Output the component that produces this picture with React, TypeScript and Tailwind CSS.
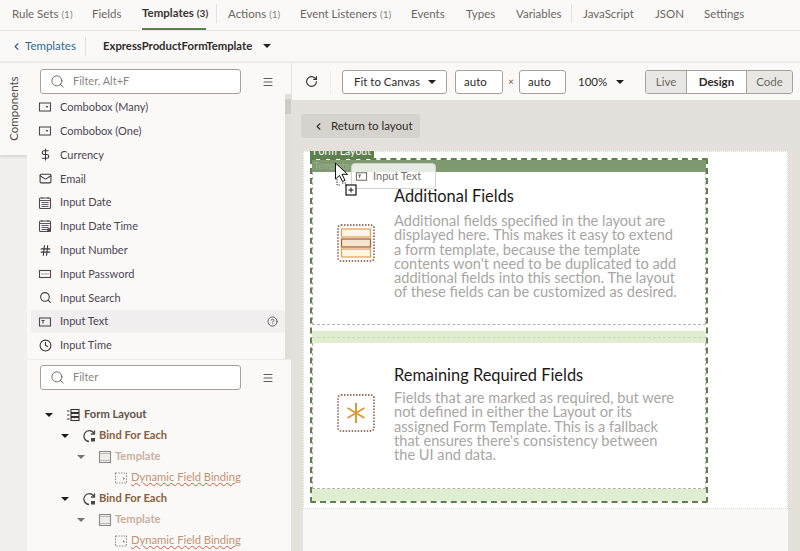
import { ChevronLeft, Search, Menu, RotateCw, DollarSign, Mail, Hash, Clock, CircleHelp } from 'lucide-react';
import type { ReactNode } from 'react';

const tabs = [
  { label: 'Rule Sets', count: '(1)', w: 'w-[58px]' },
  { label: 'Fields', w: 'w-[28px]' },
  { label: 'Templates', count: '(3)', active: true, w: 'w-[64px]', divider: true },
  { label: 'Actions', count: '(1)', w: 'w-[50px]' },
  { label: 'Event Listeners', count: '(1)', w: 'w-[89px]' },
  { label: 'Events', w: 'w-[33px]' },
  { label: 'Types', w: 'w-[28px]' },
  { label: 'Variables', w: 'w-[45px]', divider: true },
  { label: 'JavaScript', w: 'w-[50px]' },
  { label: 'JSON', w: 'w-[27px]' },
  { label: 'Settings', w: 'w-[40px]' },
];

function Box({ children }: { children: ReactNode }) {
  return (
    <svg viewBox="0 0 14 14" className="h-[14px] w-[14px] text-[#4f4a4f]" fill="none" stroke="currentColor" strokeWidth="1.1">
      {children}
    </svg>
  );
}

const ComboIcon = () => (
  <Box>
    <rect x="1.5" y="3" width="11" height="8" />
    <path d="M7.5 6h3l-1.5 2z" fill="currentColor" stroke="none" />
  </Box>
);
const DateIcon = ({ clock }: { clock?: boolean }) => (
  <Box>
    <rect x="1.5" y="2" width="11" height="10.5" rx="1" />
    <path d="M1.5 4.5h11M4 1v2M10 1v2M3.5 6.5h7M3.5 8.5h7M3.5 10.5h7" strokeWidth="0.9" />
    {clock && <circle cx="11" cy="11" r="2" fill="currentColor" stroke="none" />}
  </Box>
);
const PasswordIcon = () => (
  <Box>
    <rect x="1.5" y="3.5" width="11" height="7" />
    <path d="M3.5 7h7" strokeDasharray="1 1" />
  </Box>
);
const TextIcon = ({ className }: { className?: string }) => (
  <svg viewBox="0 0 14 14" className={className ?? 'h-[14px] w-[14px] text-[#4f4a4f]'} fill="none" stroke="currentColor" strokeWidth="1.1">
    <rect x="1.5" y="3" width="11" height="8" />
    <path d="M3.5 5.5h3M5 5.5v3" />
  </svg>
);

const lucideCls = 'h-[13px] w-[13px] text-[#3d383d]';
const components: { label: string; icon: ReactNode }[] = [
  { label: 'Combobox (Many)', icon: <ComboIcon /> },
  { label: 'Combobox (One)', icon: <ComboIcon /> },
  { label: 'Currency', icon: <DollarSign className={lucideCls} /> },
  { label: 'Email', icon: <Mail className={lucideCls} /> },
  { label: 'Input Date', icon: <DateIcon /> },
  { label: 'Input Date Time', icon: <DateIcon clock /> },
  { label: 'Input Number', icon: <Hash className={lucideCls} /> },
  { label: 'Input Password', icon: <PasswordIcon /> },
  { label: 'Input Search', icon: <Search className={lucideCls} /> },
  { label: 'Input Text', icon: <TextIcon /> },
  { label: 'Input Time', icon: <Clock className={lucideCls} /> },
];

function FilterBox({ placeholder }: { placeholder: string }) {
  return (
    <div className="flex items-center pl-[13px]">
      <div className="flex h-[25px] w-[201px] items-center gap-[8px] rounded-[3px] border border-[#a5a19c] bg-white pl-[9px]">
        <Search className="h-[15px] w-[15px] text-[#6b6762]" strokeWidth={1.5} />
        <span className="text-[11px] text-[#8a8682]">{placeholder}</span>
      </div>
      <Menu className="ml-[21px] h-[12px] w-[12px] text-[#5d5954]" />
    </div>
  );
}

function TreeRow({ indent, icon, label, tone, caret }: { indent: string; icon: ReactNode; label: string; tone: string; caret: string }) {
  return (
    <div className={`flex h-[21px] items-center ${indent}`}>
      <span className={`mr-[13px] h-0 w-0 border-x-[4px] border-t-[4px] border-x-transparent ${caret}`} />
      {icon}
      <span className={`ml-[3px] text-[11.2px] ${tone}`}>{label}</span>
    </div>
  );
}

const LayoutIcon = () => (
  <svg viewBox="0 0 14 14" className="mr-[1px] h-[14px] w-[14px] text-[#37322f]" fill="none" stroke="currentColor" strokeWidth="1.1">
    <rect x="5" y="1.5" width="8" height="3" />
    <rect x="5" y="5.5" width="8" height="3" />
    <rect x="5" y="9.5" width="8" height="3" />
    <path d="M1 3h2.5M1 7h2.5M1 11h2.5" />
  </svg>
);
const BindIcon = () => (
  <svg viewBox="0 0 14 14" className="h-[14px] w-[14px] text-[#4b4540]" fill="none" stroke="currentColor" strokeWidth="1.3">
    <path d="M12 4.5A5.4 5.4 0 1 0 7 12.5" />
    <path d="M12.5 1.5v3.5H9" />
    <rect x="9" y="9" width="4" height="3.5" fill="currentColor" stroke="none" />
  </svg>
);
const TemplateIcon = () => (
  <svg viewBox="0 0 14 14" className="h-[14px] w-[14px] text-[#8f8b87]" fill="#efedea" stroke="currentColor" strokeWidth="1.1">
    <rect x="1.5" y="1.5" width="11" height="11" />
    <path d="M1.5 3.5h11M1.5 10.5h11" strokeDasharray="1 1" />
  </svg>
);
const FieldIcon = () => (
  <svg viewBox="0 0 14 14" className="h-[14px] w-[14px] text-[#8f8b87]" fill="none" stroke="currentColor" strokeWidth="1.1">
    <rect x="1.5" y="2" width="11" height="10" strokeDasharray="1.5 1.2" />
    <path d="M9 6l2 1.5-2 1.5z" fill="currentColor" stroke="none" />
  </svg>
);

function Tree() {
  return (
    <div className="pt-[14px]">
      <TreeRow indent="pl-[18px]" caret="border-t-[#1f1c1a]" icon={<LayoutIcon />} label="Form Layout" tone="font-bold text-[#5f5147]" />
      {[0, 1].map((i) => (
        <div key={i}>
          <TreeRow indent="pl-[34px]" caret="border-t-[#1f1c1a]" icon={<BindIcon />} label="Bind For Each" tone="font-bold text-[#8a5f3e]" />
          <TreeRow indent="pl-[50px]" caret="border-t-[#77736f]" icon={<TemplateIcon />} label="Template" tone="font-bold text-[#c9b0a0]" />
          <div className="flex h-[21px] items-center gap-[3px] pl-[87px]">
            <FieldIcon />
            <span className="text-[11.2px] text-[#c39273] underline decoration-[#d9583c] decoration-wavy decoration-1 underline-offset-1">
              Dynamic Field Binding
            </span>
          </div>
        </div>
      ))}
    </div>
  );
}

function Sidebar() {
  return (
    <div className="flex w-[292px] shrink-0 bg-[#f1f0ee]">
      <div className="w-[27px] shrink-0">
        <div className="flex h-[92px] items-center justify-center bg-[#fbf9f8] shadow-[0_2px_3px_rgba(0,0,0,0.12)]">
          <span className="-rotate-90 whitespace-nowrap text-[11.5px] text-[#4f4b47]">Components</span>
        </div>
      </div>
      <div className="flex w-[265px] flex-col border-r border-[#e4e1dc] bg-[#fbf9f8]">
        <div className="pt-[6px]">
          <FilterBox placeholder="Filter, Alt+F" />
        </div>
        <div className="flex h-[265px] shrink-0">
          <div className="w-[258px] pl-[4px] pt-[1.5px]">
            {components.map((c) => (
              <div
                key={c.label}
                className={`flex h-[23.8px] items-center rounded-[2px] pl-[5px] pr-[7px] ${c.label === 'Input Text' ? 'bg-[#f1eff0]' : ''}`}
              >
                <span className="flex w-[18px] justify-center">{c.icon}</span>
                <span className="ml-[6px] flex-1 text-[11px] text-[#4b4652]">{c.label}</span>
                {c.label === 'Input Text' && <CircleHelp className="h-[11px] w-[11px] text-[#5d5954]" />}
              </div>
            ))}
          </div>
          <div className="w-[6px] bg-[#e2dfdb]">
            <div className="mt-[5px] h-[15px] bg-[#cfccc8]" />
          </div>
        </div>
        <div className="border-t border-[#eeece9] pt-[5px]">
          <FilterBox placeholder="Filter" />
        </div>
        <Tree />
      </div>
    </div>
  );
}

function Toolbar() {
  return (
    <div className="flex h-[37px] items-center bg-[#fbf9f8] pl-[13px]">
      <RotateCw className="h-[13px] w-[13px] text-[#2f2b28]" strokeWidth={2} />
      <div className="ml-[12px] mr-[11px] h-[24px] w-px bg-[#eeece9]" />
      <div className="flex h-[24px] w-[105px] items-center justify-between rounded-[3px] border border-[#a5a19c] bg-white pl-[11px] pr-[10px]">
        <span className="text-[11.5px] text-[#2f2b28]">Fit to Canvas</span>
        <span className="h-0 w-0 border-x-[4px] border-t-[4px] border-x-transparent border-t-[#1f1c1a]" />
      </div>
      <div className="ml-[8px] flex h-[24px] w-[48px] items-center rounded-[3px] border border-[#a5a19c] bg-white pl-[8px] text-[11.5px] text-[#2f2b28]">auto</div>
      <span className="w-[16px] text-center text-[10px] text-[#5d5954]">×</span>
      <div className="flex h-[24px] w-[47px] items-center rounded-[3px] border border-[#a5a19c] bg-white pl-[8px] text-[11.5px] text-[#2f2b28]">auto</div>
      <span className="ml-[12px] w-[27px] text-[11.5px] text-[#2f2b28]">100%</span>
      <span className="ml-[11px] h-0 w-0 border-x-[4px] border-t-[4px] border-x-transparent border-t-[#1f1c1a]" />
      <div className="ml-[21px] flex h-[24px] w-[148px] overflow-hidden rounded-[3px] border border-[#a5a19c] text-[11.5px]">
        <span className="flex w-[41px] items-center justify-center border-r border-[#a5a19c] bg-[#e9e7e4] text-[#6b6762]">Live</span>
        <span className="flex w-[59px] items-center justify-center bg-white font-bold text-[#2f2b28]">Design</span>
        <span className="flex flex-1 items-center justify-center border-l border-[#a5a19c] bg-[#e9e7e4] text-[#6b6762]">Code</span>
      </div>
    </div>
  );
}

function Section({ icon, title, body, h, top, gap }: { icon: ReactNode; title: string; body: string[]; h: string; top: string; gap: string }) {
  return (
    <div className={`flex border-x border-b border-dashed border-[#b5b3b0] ${h} ${top}`}>
      <div className="w-[24px] shrink-0" />
      <div className="w-[38px] shrink-0">{icon}</div>
      <div className="ml-[19px]">
        <div className="text-[16.4px] leading-[22px] text-[#1c1a18]">{title}</div>
        <div className={`whitespace-nowrap text-[14.6px] leading-[14.3px] text-[#a8a6a3] ${gap}`}>
          {body.map((line) => (
            <div key={line}>{line}</div>
          ))}
        </div>
      </div>
    </div>
  );
}

function Canvas() {
  return (
    <div className="relative flex-1 overflow-hidden bg-[#e4e1dc]">
      <div className="px-[9px] pt-[14px]">
        <div className="flex h-[24px] w-[119px] items-center gap-[7px] rounded-[3px] bg-[#d6d3ce] pl-[12px]">
          <ChevronLeft className="h-[11px] w-[11px] text-[#2f2b28]" strokeWidth={2.5} />
          <span className="text-[11.5px] text-[#2f2b28]">Return to layout</span>
        </div>
      </div>
      <div className="ml-[11px] mt-[13px] flex h-full w-[485px] flex-col bg-[#f9f8f6]">
        <div className="relative h-[358px] border border-dotted border-[#d4e2c8] bg-white px-[6px] pt-[6px]">
          <div className="absolute left-[6px] top-[-1px] flex h-[8px] w-[64px] items-start justify-center overflow-hidden bg-[#5e7f4e] text-[10.5px] leading-[10px] text-white">
            <span className="-translate-y-[5px]">Form Layout</span>
          </div>
          <div className="h-[345px] w-[398px] rounded-[2px] border-2 border-dashed border-[#5f7f4e]">
            <div className="h-[12px] overflow-hidden bg-[#7f9a70] pl-[2px] text-[9px] leading-[12px] text-white/25">Template</div>
            <Section
              h="h-[153px]"
              top="pt-[13px]"
              gap="mt-[7px]"
              title="Additional Fields"
              icon={
                <svg viewBox="0 0 38 38" className="mt-[39px] h-[38px] w-[38px]" fill="none">
                  <rect x="1" y="1" width="36" height="36" rx="3" stroke="#7b4a33" strokeWidth="1.4" strokeDasharray="1.5 1.5" />
                  <rect x="4.5" y="5" width="29" height="8" fill="#fdf6e8" stroke="#e0a050" strokeWidth="1.2" />
                  <rect x="4.5" y="15" width="29" height="8" fill="#f5e6d0" stroke="#b06a40" strokeWidth="1.4" />
                  <rect x="4.5" y="25" width="29" height="8" fill="#fdf6e8" stroke="#e0a050" strokeWidth="1.2" />
                </svg>
              }
              body={[
                'Additional fields specified in the layout are',
                'displayed here. This makes it easy to extend',
                'a form template, because the template',
                "contents won't need to be duplicated to add",
                'additional fields into this section. The layout',
                'of these fields can be customized as desired.',
              ]}
            />
            <div className="mt-[6px] h-[12px] bg-[#dfeed0] pt-[6px]">
              <div className="border-t border-dashed border-[#c9d6bd]" />
            </div>
            <Section
              h="h-[146px]"
              top="pt-[21px]"
              gap="mt-[5px]"
              title="Remaining Required Fields"
              icon={
                <svg viewBox="0 0 38 38" className="mt-[30px] h-[38px] w-[38px]" fill="none">
                  <rect x="1" y="1" width="36" height="36" rx="3" stroke="#7b4a33" strokeWidth="1.4" strokeDasharray="1.5 1.5" />
                  <path d="M19 9v20M10.5 14l17 10M27.5 14l-17 10" stroke="#d9993f" strokeWidth="2" />
                </svg>
              }
              body={[
                'Fields that are marked as required, but were',
                'not defined in either the Layout or its',
                'assigned Form Template. This is a fallback',
                "that ensures there's consistency between",
                'the UI and data.',
              ]}
            />
            <div className="h-[12px] bg-[#dfeed0]" />
          </div>
        </div>
      </div>

      {/* drag ghost */}
      <div className="absolute left-[59px] top-[63px] flex h-[26px] w-[85px] items-center gap-[4px] rounded-[4px] border border-[#d4d2cf] bg-white/80 pl-[3px]">
        <TextIcon className="h-[13px] w-[13px] text-[#6b6762]" />
        <span className="ml-[1px] text-[11px] text-[#77736f]">Input Text</span>
      </div>
      <svg viewBox="0 0 26 34" className="absolute left-[42px] top-[62px] h-[34px] w-[26px]">
        <path d="M1.5 1v16l4-3.5 3 6 2.5-1.2-3-6h5.5z" fill="#fff" stroke="#111" strokeWidth="1" />
        <path d="M3 17v6h3M8 21h4v4" fill="none" stroke="#333" strokeWidth="0.9" strokeDasharray="1.5 1" />
        <rect x="12" y="23" width="10" height="10" fill="#fff" stroke="#111" strokeWidth="1.2" />
        <path d="M14.5 28h5M17 25.5v5" stroke="#111" strokeWidth="1" />
      </svg>
    </div>
  );
}

export default function App() {
  return (
    <div className='flex h-[551px] w-[800px] flex-col overflow-hidden bg-[#fbf9f8] font-["Lato",sans-serif]'>
      <div className="flex h-[31px] shrink-0 items-stretch gap-[22px] border-b border-[#e8e6e3] pl-[12px]">
        {tabs.map((t) => (
          <div key={t.label} className="relative flex items-center">
            <div className={`relative flex h-full ${t.w} items-center whitespace-nowrap pb-[2px] text-[11.5px] ${t.active ? 'border-b-2 border-[#5e7f4e] font-bold text-[#3a3633]' : 'text-[#6b6762]'}`}>
              {t.label}
              {t.count && <span className={`ml-[3px] text-[10px] ${t.active ? 'text-[#3a3633]' : 'text-[#8a8682]'}`}>{t.count}</span>}
            </div>
            {t.divider && <div className="absolute right-[-11px] top-[4px] h-[19px] w-px bg-[#e4e1dc]" />}
          </div>
        ))}
      </div>
      <div className="flex h-[32px] shrink-0 items-center border-b-2 border-[#eeece9] pl-[11px]">
        <ChevronLeft className="h-[11px] w-[11px] text-[#2f5f8a]" strokeWidth={2.5} />
        <span className="ml-[3px] w-[50px] text-[11.5px] text-[#2f6a8f]">Templates</span>
        <div className="ml-[10px] mr-[17px] h-[19px] w-px bg-[#e4e1dc]" />
        <span className="text-[11.3px] font-bold text-[#2f2b28]">ExpressProductFormTemplate</span>
        <span className="ml-[11px] h-0 w-0 border-x-[4px] border-t-[4px] border-x-transparent border-t-[#1f1c1a]" />
      </div>
      <div className="flex min-h-0 flex-1">
        <Sidebar />
        <div className="flex min-w-0 flex-1 flex-col">
          <Toolbar />
          <Canvas />
        </div>
      </div>
    </div>
  );
}
